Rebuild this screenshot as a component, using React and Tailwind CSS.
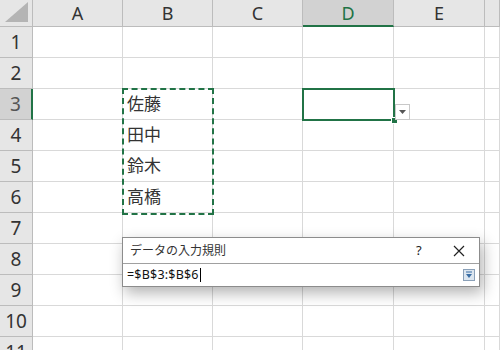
import React from "react";

const cols = ["A", "B", "C", "D", "E", ""];
const rows = [1, 2, 3, 4, 5, 6, 7, 8, 9, 10, 11];
const names = { 3: "佐藤", 4: "田中", 5: "鈴木", 6: "高橋" };

function Corner() {
  return (
    <div className="relative border-r border-b border-[#bcbcbc] bg-[#e6e6e6]">
      <svg className="absolute right-[4px] bottom-[4px]" width="23" height="20" viewBox="0 0 23 20">
        <polygon points="23,0 23,20 0,20" fill="#b4b4b4" />
      </svg>
    </div>
  );
}

function ColHeader({ label }) {
  const active = label === "D";
  return (
    <div
      className={
        active
          ? "flex items-center justify-center border-r border-[#bcbcbc] border-b-2 border-b-[#217346] bg-[#d2d2d2] text-[#217346] text-[18px] pt-[1px]"
          : "flex items-center justify-center border-r border-b border-[#bcbcbc] bg-[#e6e6e6] text-[#333] text-[18px]"
      }
    >
      {label}
    </div>
  );
}

function RowHeader({ n }) {
  const active = n === 3;
  return (
    <div
      className={
        active
          ? "flex items-center justify-center border-b border-[#bcbcbc] border-r-2 border-r-[#217346] bg-[#d2d2d2] text-[#555] text-[19px]"
          : "flex items-center justify-center border-r border-b border-[#bcbcbc] bg-[#e6e6e6] text-[#333] text-[19px]"
      }
    >
      {n}
    </div>
  );
}

export default function App() {
  return (
    <div
      className="relative w-[500px] h-[350px] overflow-hidden bg-white"
      style={{ fontFamily: '"Noto Sans", "Noto Sans CJK JP", sans-serif' }}
    >
      <div className="grid grid-cols-[33px_90px_90px_90px_91px_91px_1fr] grid-rows-[27px_repeat(11,31px)]">
        <Corner />
        {cols.map((c, i) => (
          <ColHeader key={i} label={c} />
        ))}
        {rows.map((r) => (
          <React.Fragment key={r}>
            <RowHeader n={r} />
            {cols.map((c, i) => (
              <div
                key={i}
                className="flex items-center border-r border-b border-[#d9d9d9] pl-[4px] text-[17px] text-[#333]"
              >
                {c === "B" && names[r] ? names[r] : ""}
              </div>
            ))}
          </React.Fragment>
        ))}
      </div>

      {/* copy range marquee */}
      <div className="absolute left-[122px] top-[88px] w-[92px] h-[127px] border-2 border-dashed border-[#217346]" />

      {/* active cell D3 */}
      <div className="absolute left-[302px] top-[88px] w-[93px] h-[33px] border-2 border-[#217346]" />
      <div className="absolute left-[392px] top-[118px] w-[5px] h-[5px] bg-[#217346] outline outline-1 outline-white" />

      {/* validation dropdown arrow */}
      <div className="absolute left-[395px] top-[104px] w-[15px] h-[16px] bg-white border border-[#c8c8c8] flex items-center justify-center">
        <svg width="7" height="4" viewBox="0 0 7 4">
          <polygon points="0,0 7,0 3.5,4" fill="#555" />
        </svg>
      </div>

      {/* collapsed data validation dialog */}
      <div className="absolute left-[122px] top-[237px] w-[358px] h-[50px] bg-white border border-[#8c8c8c] shadow-[3px_6px_14px_rgba(0,0,0,0.3)] flex flex-col">
        <div className="flex items-center h-[26px] border-b border-[#a0a0a0] text-[12px] text-[#333]">
          <span className="pl-[7px] flex-1">データの入力規則</span>
          <span className="w-[12px] text-[13px] text-[#222] mr-[25px]">?</span>
          <svg className="mr-[14px]" width="12" height="12" viewBox="0 0 12 12">
            <path d="M1 1 L11 11 M11 1 L1 11" stroke="#222" strokeWidth="1.2" />
          </svg>
        </div>
        <div className="flex items-center flex-1 pl-[4px] pr-[4px]">
          <span className="text-[12.5px] text-[#111] tracking-[0.2px]">=$B$3:$B$6</span>
          <span className="w-[1px] h-[14px] bg-black ml-[1px]" />
          <span className="flex-1" />
          <div className="w-[12px] h-[12px] border border-[#8aa0b8] bg-[#dce6f0] flex items-center justify-center">
            <svg width="8" height="8" viewBox="0 0 8 8">
              <rect x="1" y="0.5" width="6" height="1" fill="#3a6ea5" />
              <polygon points="1,3 7,3 4,7" fill="#3a6ea5" />
            </svg>
          </div>
        </div>
      </div>
    </div>
  );
}
